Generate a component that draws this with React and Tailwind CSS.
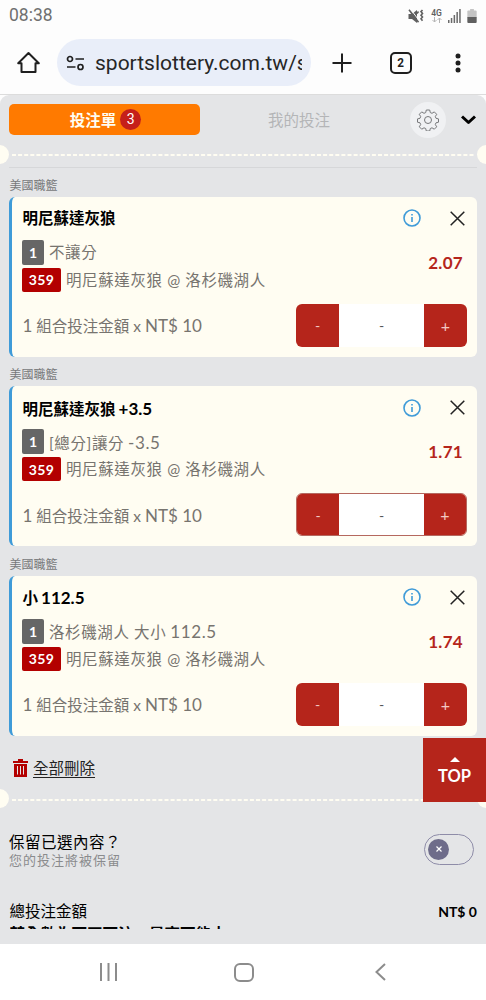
import React, { useState } from 'react';

const bets = [
  { id: 1, pick: '明尼蘇達灰狼', line: '', market: '不讓分', handicap: '', odds: '2.07', outlined: false },
  { id: 2, pick: '明尼蘇達灰狼', line: '+3.5', market: '[總分]讓分', handicap: '-3.5', odds: '1.71', outlined: true },
  { id: 3, pick: '小', line: '112.5', market: '洛杉磯湖人 大小', handicap: '112.5', odds: '1.74', outlined: false },
];

function StatusBar() {
  return (
    <div className="flex h-[32px] shrink-0 items-center justify-between pl-[9px] pr-[9px]">
      <span className="font-['Roboto',sans-serif] text-[17.500px] leading-none text-[#707070]">08:38</span>
      <div className="flex items-center">
        <svg width="16" height="15" viewBox="0 0 16 15" fill="none" stroke="#606060" className="mr-[7px]">
          <path d="M0.500 5h3.500l5-4v13L4 10H.5z" fill="#606060" stroke="none" />
          <path d="M2.500 0l8.500 11.500" stroke="#fdfdfd" strokeWidth="1" />
          <path d="M1 .8l9.500 12.400" strokeWidth="1.600" />
          <path d="M10.500 2.500l-1.500 2" strokeWidth="1.500" />
          <path d="M14.500 1l-1.500 1.600 1.500 1.800-1.500 1.800 1.500 1.800-1.500 1.800 1.500 2" strokeWidth="1.600" />
        </svg>
        <div className="mr-[6px] flex w-[11px] flex-col items-center">
          <span className="font-['Roboto',sans-serif] text-[8.500px] font-semibold leading-[8px] text-[#606060]">4G</span>
          <svg width="10" height="6" viewBox="0 0 10 6" fill="none" stroke="#b5b5b5">
            <path d="M2.500 0v5M.5 3l2 2 2-2M7.500 6V1M5.500 3l2-2 2 2" />
          </svg>
        </div>
        <svg width="13" height="14" viewBox="0 0 13 14" fill="#6a6a6a" className="mr-[6px]">
          <path d="M0 11h1.500v3H0zM2.800 9h1.500v5H2.800zM5.600 6h1.500v8H5.600zM8.400 3h1.500v11H8.400zM11.200 0h1.500v14h-1.500z" />
        </svg>
        <svg width="10" height="14" viewBox="0 0 10 15">
          <path d="M3 0h4v1.500h2a1 1 0 0 1 1 1V9H0V2.500a1 1 0 0 1 1-1h2z" fill="#c4c4c4" />
          <path d="M0 8.500h10V14a1 1 0 0 1-1 1H1a1 1 0 0 1-1-1z" fill="#606060" />
        </svg>
      </div>
    </div>
  );
}

function BrowserBar() {
  return (
    <div className="flex h-[63px] shrink-0 items-center border-b border-[#dcdcdc] pb-px pl-[17px]">
      <svg width="23" height="23" viewBox="0 0 23 23" fill="none" stroke="#1f1f1f" strokeWidth="2" strokeLinejoin="round">
        <path d="M1.200 12.200L11.500 2l10.300 10.200H18.500V21h-14v-8.800z" />
      </svg>
      <div className="ml-[17px] flex h-[47px] w-[254px] items-center rounded-full bg-[#e9eef9] pl-[9px] pr-[9px]">
        <svg width="19" height="16" viewBox="0 0 19 16" fill="none" stroke="#1f1f1f" strokeWidth="1.700" className="shrink-0">
          <circle cx="4" cy="4" r="2.500" />
          <circle cx="14.500" cy="12" r="2.500" />
          <path d="M9.500 4H18M1 12h8.500" />
        </svg>
        <span className="ml-[10px] overflow-hidden whitespace-nowrap font-['Roboto',sans-serif] text-[21px] leading-[28px] text-[#262626]">
          sportslottery.com.tw/s
        </span>
      </div>
      <svg width="20" height="20" viewBox="0 0 20 20" stroke="#1f1f1f" strokeWidth="2" className="ml-[21px]">
        <path d="M10 .5v19M.5 10h19" />
      </svg>
      <div className="ml-[38px] flex h-[22px] w-[22px] items-center justify-center rounded-[5px] border-2 border-[#1f1f1f] font-['Roboto',sans-serif] text-[13px] font-bold text-[#1f1f1f]">
        <span className="scale-x-90">2</span>
      </div>
      <svg width="6" height="20" viewBox="0 0 6 20" fill="#1f1f1f" className="ml-[43px]">
        <circle cx="3" cy="3" r="2.500" />
        <circle cx="3" cy="10" r="2.500" />
        <circle cx="3" cy="17" r="2.500" />
      </svg>
    </div>
  );
}

function Perforation() {
  return (
    <div className="flex h-[20px] shrink-0 items-center overflow-hidden">
      <span className="-ml-[10px] h-[19px] w-[19px] shrink-0 rounded-full bg-[#fffdf2]" />
      <svg height="2" className="mx-[3px] mt-[2px] min-w-0 flex-1">
        <line x1="0" y1="1" x2="500" y2="1" stroke="#fffdf2" strokeWidth="2" strokeDasharray="4 2.100" />
      </svg>
      <span className="-mr-[10px] h-[19px] w-[19px] shrink-0 rounded-full bg-[#fffdf2]" />
    </div>
  );
}

function Tabs() {
  return (
    <div className="flex h-[49px] shrink-0 items-center pl-[9px]">
      <button className="flex h-[31px] w-[191px] items-center justify-center rounded-[5px] bg-[#ff7a00] pl-[2px] text-[15.500px] font-bold text-[#fffdf2]">
        <span className="pt-[2px]">投注單</span>
        <span className="ml-[4px] flex h-[21px] w-[21px] items-center justify-center rounded-full bg-[#c5201a] font-['Roboto',sans-serif] text-[14px] font-normal text-white">
          3
        </span>
      </button>
      <button className="ml-[68px] pt-[2px] text-[15.500px] text-[#b4b5b7]">我的投注</button>
      <span className="ml-[80px] flex h-[36px] w-[36px] items-center justify-center rounded-full bg-[#f0f1f3]">
        <svg width="22" height="22" viewBox="0 0 22 22" fill="none" stroke="#77787a" strokeWidth="1">
          <circle cx="11" cy="11" r="3.500" />
          <path
            d="M9.300 1h3.400l.6 2.600 1.700.7 2.300-1.400 2.400 2.400-1.400 2.300.7 1.700 2.500.6v3.300l-2.500.6-.7 1.700 1.400 2.300-2.400 2.400-2.300-1.400-1.700.7-.6 2.500H9.300l-.6-2.500-1.700-.7-2.300 1.400-2.400-2.400 1.400-2.300-.7-1.700L.5 13.200V9.900L3 9.300l.7-1.700-1.400-2.300 2.400-2.400L7 4.300l1.700-.7z"
            strokeLinejoin="round"
          />
        </svg>
      </span>
      <svg width="15" height="10" viewBox="0 0 15 10" fill="none" stroke="#000" strokeWidth="3" className="ml-[15px] mt-px">
        <path d="M1 1.500l6.500 6L14 1.500" strokeLinejoin="round" />
      </svg>
    </div>
  );
}

function Stepper({ outlined }) {
  return (
    <div className={`flex h-[43px] w-[171px] overflow-hidden rounded-[6px] text-[14px] ${outlined ? 'border border-[#b5685f]' : ''}`}>
      <button className="flex flex-1 items-center justify-center bg-[#b5251b] pt-px text-[#f3c9c4]">-</button>
      <span className="flex w-[85px] items-center justify-center bg-white pt-px text-[#555]">-</span>
      <button className="flex flex-1 items-center justify-center bg-[#b5251b] pt-px text-[16px] text-[#f3c9c4]">+</button>
    </div>
  );
}

function BetCard({ bet }) {
  return (
    <section className="h-[189.500px] shrink-0">
      <h4 className="flex h-[28.500px] items-center pl-[0.500px] pt-[7px] text-[12px] leading-none text-[#77787a]">美國職籃</h4>
      <div className="flex h-[160px] flex-col rounded-[6px] border-l-[3px] border-[#3f9bd8] bg-[#fffdf2] pl-[10px] pr-[10px]">
        <div className="flex h-[43px] items-center">
          <h3 className="flex flex-1 items-baseline gap-[3px] pl-[0.500px] pt-[2px] text-[15.500px] font-bold text-black">
            {bet.pick}
            {bet.line && <span className="text-[17px]">{bet.line}</span>}
          </h3>
          <svg width="18" height="18" viewBox="0 0 18 18" fill="none" stroke="#3f9bd8" strokeWidth="1.600">
            <circle cx="9" cy="9" r="8" />
            <path d="M9 8v5M9 5v1.500" />
          </svg>
          <svg width="15" height="15" viewBox="0 0 15 15" stroke="#222" strokeWidth="1.500" className="ml-[29px] mr-[2px]">
            <path d="M.7.7l13.600 13.600M14.300.7L.7 14.300" />
          </svg>
        </div>
        <div className="flex h-[53px] items-start text-[15.500px] text-[#77746f]">
          <div className="flex-1 tracking-[0.600px]">
            <div className="flex h-[25px] items-center">
              <span className="mr-[5px] flex h-[25px] w-[22px] items-center justify-center rounded-[2px] bg-[#666] text-[14px] font-bold tracking-normal text-white">1</span>
              <span className="flex items-baseline gap-[4px] pt-[2px]">
                {bet.market}
                {bet.handicap && <span className="text-[17px]">{bet.handicap}</span>}
              </span>
            </div>
            <div className="mt-[3px] flex h-[24px] items-center">
              <span className="mr-[5px] flex h-[24px] w-[39px] items-center justify-center rounded-[2px] bg-[#b30000] text-[14px] font-bold tracking-[0.300px] text-white">359</span>
              <span className="pt-[2px]">明尼蘇達灰狼 @ 洛杉磯湖人</span>
            </div>
          </div>
          <span className="mr-[4px] mt-[10px] text-[17px] font-bold tracking-[0.300px] text-[#b5251b]">{bet.odds}</span>
        </div>
        <div className="mt-[11px] flex items-center justify-between">
          <span className="pl-[0.500px] pt-[2px] text-[15.500px] text-[#77746f]">
            <span className="text-[17px]">1</span> 組合投注金額 x <span className="text-[17px]">NT$ 10</span>
          </span>
          <Stepper outlined={bet.outlined} />
        </div>
      </div>
    </section>
  );
}

function KeepToggle() {
  const [on, setOn] = useState(false);
  return (
    <button
      onClick={() => setOn(!on)}
      className={`mr-[3px] flex h-[31px] w-[50px] items-center rounded-full border border-[#8e8ca8] px-[3px] ${on ? 'justify-end' : 'justify-start'}`}
    >
      <span className="flex h-[21px] w-[21px] items-center justify-center rounded-full bg-[#6e6c8a]">
        <svg width="6" height="6" viewBox="0 0 6 6" stroke="#fff" strokeWidth="1.200">
          <path d="M.5.5l5 5M5.500.5l-5 5" />
        </svg>
      </span>
    </button>
  );
}

function NavBar() {
  return (
    <div className="flex h-[56px] shrink-0 items-center bg-white pl-[100px] pr-[100px]">
      <svg width="17" height="18" viewBox="0 0 17 18" stroke="#8c8c8c" strokeWidth="2">
        <path d="M1 0v18M8.500 0v18M16 0v18" />
      </svg>
      <span className="ml-[117px] h-[19px] w-[20px] rounded-[6px] border-2 border-[#8c8c8c]" />
      <svg width="11" height="18" viewBox="0 0 11 18" fill="none" stroke="#8c8c8c" strokeWidth="2" className="ml-[121px]">
        <path d="M10 1L1.500 9l8.500 8" />
      </svg>
    </div>
  );
}

export default function App() {
  return (
    <div className="flex h-[1000px] w-[486px] flex-col overflow-hidden bg-[#fdfdfd] font-['Lato','Noto_Sans_CJK_TC',sans-serif]">
      <StatusBar />
      <BrowserBar />

      <main className="flex h-[849px] shrink-0 flex-col overflow-hidden rounded-t-[9px] bg-[#e4e5e7]">
        <Tabs />
        <Perforation />
        <div className="mx-[9px] h-[4px] shrink-0 border-b border-[#d6d7d9]" />

        <div className="px-[9px]">
          {bets.map((bet) => (
            <BetCard key={bet.id} bet={bet} />
          ))}
        </div>

        <div className="flex h-[52px] shrink-0 items-start justify-between">
          <button className="ml-[13px] mt-[18px] flex items-center text-[15.500px] leading-[26px] text-[#222]">
            <svg width="15" height="18" viewBox="0 0 15 18" className="mr-[5px]">
              <path d="M5 0h5v2h5v2H0V2h5z" fill="#b30000" />
              <path d="M1 5h13v13H1z" fill="#b30000" />
              <path d="M4.500 7v8.500M7.500 7v8.500M10.500 7v8.500" stroke="#e4e5e7" strokeWidth="1" />
            </svg>
            <span className="underline underline-offset-[3px]">全部刪除</span>
          </button>
          <button className="relative z-10 mt-px flex h-[64px] w-[63px] shrink-0 flex-col items-center bg-[#b5251b] pt-[19px] text-[16.500px] font-bold leading-[29px] text-white">
            <svg width="10" height="5" viewBox="0 0 10 5" fill="#fff" className="shrink-0">
              <path d="M5 0l5 5H0z" />
            </svg>
            TOP
          </button>
        </div>

        <Perforation />

        <div className="mt-[22px] flex shrink-0 items-center justify-between px-[9px]">
          <div className="pt-px">
            <p className="text-[15.500px] leading-[20px] tracking-[0.500px] text-black">保留已選內容？</p>
            <p className="text-[13px] leading-[16px] tracking-[1px] text-[#8a8b8d]">您的投注將被保留</p>
          </div>
          <KeepToggle />
        </div>

        <div className="mt-[32px] flex shrink-0 items-center justify-between px-[9px] text-[15.500px] leading-[22px]">
          <span className="pl-[0.500px] text-black">總投注金額</span>
          <span className="pt-px text-[14px] font-bold text-black">NT$ 0</span>
        </div>
        <div className="ml-[9.500px] h-[6px] shrink-0 overflow-hidden text-[15.500px] font-bold leading-[23px] text-black">
          若全數為可正可注，最高可能中
        </div>
      </main>

      <NavBar />
    </div>
  );
}
